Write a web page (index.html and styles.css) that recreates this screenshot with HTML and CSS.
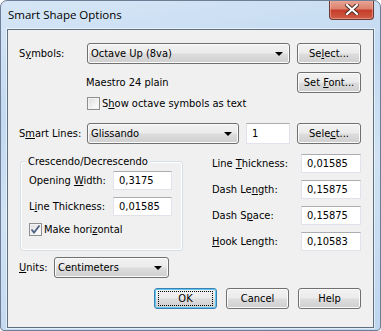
FILE: index.html
```html
<!DOCTYPE html>
<html lang="en">
<head>
  <meta charset="UTF-8" />
  <title>Smart Shape Options</title>
  <link rel="stylesheet" href="styles.css">
</head>
<body>
  <div class="window">
    <div class="titlebar">
      <span class="title">Smart Shape Options</span>
      <div class="close">
        <svg width="14" height="11" viewBox="0 0 14 11">
          <path d="M2 1 L12 10 M12 1 L2 10" stroke="#4a2a22" stroke-width="4" stroke-linecap="square"/>
          <path d="M2 1 L12 10 M12 1 L2 10" stroke="#ffffff" stroke-width="2.2" stroke-linecap="square"/>
        </svg>
      </div>
    </div>

    <div class="client">
      <div class="row row-symbols">
        <span class="lbl lbl-wide">S<u>y</u>mbols:</span>
        <div class="combo combo-symbols"><span>Octave Up (8va)</span><span class="arrow"></span></div>
        <div class="btn btn-side"><span>Se<u>l</u>ect...</span></div>
      </div>

      <div class="row row-font">
        <span class="font-name">Maestro 24 plain</span>
        <div class="btn btn-side"><span>Set <u>F</u>ont...</span></div>
      </div>

      <div class="check check-octave">
        <span class="box"></span>
        <span>S<u>h</u>ow octave symbols as text</span>
      </div>

      <div class="row row-lines">
        <span class="lbl lbl-wide">S<u>m</u>art Lines:</span>
        <div class="combo combo-lines"><span>Glissando</span><span class="arrow"></span></div>
        <div class="field-input input-count">1</div>
        <div class="btn btn-side"><span>Sele<u>c</u>t...</span></div>
      </div>

      <div class="lower">
        <div class="group">
          <div class="legend">Crescendo/Decrescendo</div>
          <div class="field">
            <span class="group-lbl">Opening <u>W</u>idth:</span>
            <div class="field-input input-small">0,3175</div>
          </div>
          <div class="field">
            <span class="group-lbl">L<u>i</u>ne Thickness:</span>
            <div class="field-input input-small">0,01585</div>
          </div>
          <div class="check check-horizontal">
            <span class="box">
              <svg width="11" height="11" viewBox="0 0 11 11">
                <path d="M1.5 5.5 L4 8.5 L9.5 1.5" fill="none" stroke="#4d6185" stroke-width="1.8"/>
              </svg>
            </span>
            <span>Make hori<u>z</u>ontal</span>
          </div>
        </div>

        <div class="fields">
          <div class="field">
            <span class="side-lbl">Line <u>T</u>hickness:</span>
            <div class="field-input input-side">0,01585</div>
          </div>
          <div class="field">
            <span class="side-lbl">Dash Le<u>n</u>gth:</span>
            <div class="field-input input-side">0,15875</div>
          </div>
          <div class="field">
            <span class="side-lbl">Dash S<u>p</u>ace:</span>
            <div class="field-input input-side">0,15875</div>
          </div>
          <div class="field">
            <span class="side-lbl"><u>H</u>ook Length:</span>
            <div class="field-input input-side">0,10583</div>
          </div>
        </div>
      </div>

      <div class="row row-units">
        <span class="lbl lbl-units"><u>U</u>nits:</span>
        <div class="combo combo-units"><span>Centimeters</span><span class="arrow"></span></div>
      </div>

      <div class="buttons">
        <div class="btn btn-dialog btn-default"><span class="focus">OK</span></div>
        <div class="btn btn-dialog"><span>Cancel</span></div>
        <div class="btn btn-dialog"><span>Help</span></div>
      </div>
    </div>
  </div>
</body>
</html>
```

FILE: styles.css
```css
body {
  margin: 0;
  background: #ffffff;
  font-family: 'DejaVu Sans Condensed', 'Liberation Sans', sans-serif;
  font-size: 11px;
  color: #000;
}
u {
  text-decoration: underline;
  text-underline-offset: 1px;
}
.window {
  width: 381px;
  height: 331px;
  box-sizing: border-box;
  border: 1px solid #6d7f96;
  border-radius: 7px 7px 4px 4px;
  background: linear-gradient(170deg, #d6e6f6 0%, #c2d9f1 30%, #d0e2f4 55%, #bed5ee 100%);
  padding: 0 6px 0 6px;
  overflow: hidden;
}
.titlebar {
  height: 28px;
  display: flex;
  align-items: flex-start;
}
.title {
  font-family: 'Open Sans', 'Liberation Sans', sans-serif;
  font-size: 11.5px;
  margin: 6px 0 0 1px;
  color: #000;
}
.close {
  margin-left: auto;
  margin-top: -1px;
  width: 45px;
  height: 20px;
  box-sizing: border-box;
  border: 1px solid #6b3a34;
  border-top: none;
  border-radius: 0 0 4px 4px;
  background: linear-gradient(#eaa899 0%, #dc826f 45%, #c63d2a 55%, #cf5e47 100%);
  box-shadow: inset 0 0 0 1px rgba(255, 200, 190, 0.45);
  display: flex;
  align-items: center;
  justify-content: center;
}
.client {
  width: 367px;
  height: 299px;
  box-sizing: border-box;
  border: 1px solid #5f6f80;
  box-shadow: 0 0 0 1px rgba(255, 255, 255, 0.55);
  background: #f0f0f0;
  padding: 0 12px 0 11px;
  display: flex;
  flex-direction: column;
}
.row {
  display: flex;
  align-items: center;
}
.row-symbols { margin-top: 13px; height: 21px; }
.row-font { margin-top: 8px; height: 21px; }
.row-lines { margin-top: 13px; height: 21px; }
.row-units { margin-top: 6px; height: 21px; }
.lbl-wide { width: 68px; }
.lbl-units { width: 35px; }
.font-name { margin-left: 67px; }
.btn {
  box-sizing: border-box;
  height: 21px;
  border: 1px solid #707070;
  border-radius: 3px;
  background: linear-gradient(#f2f2f2 0%, #ebebeb 48%, #dddddd 52%, #cfcfcf 100%);
  box-shadow: inset 0 0 0 1px #fbfbfb;
  display: flex;
  align-items: center;
  justify-content: center;
}
.btn-side {
  width: 64px;
  margin-left: auto;
}
.combo {
  box-sizing: border-box;
  height: 21px;
  border: 1px solid #707070;
  border-radius: 3px;
  background: linear-gradient(#f2f2f2 0%, #ebebeb 48%, #dddddd 52%, #cfcfcf 100%);
  box-shadow: inset 0 0 0 1px #fbfbfb;
  display: flex;
  align-items: center;
  padding-left: 3px;
}
.arrow {
  margin-left: auto;
  margin-right: 6px;
  width: 0;
  height: 0;
  border-left: 4px solid transparent;
  border-right: 4px solid transparent;
  border-top: 4px solid #000;
}
.combo-symbols { width: 203px; }
.combo-lines { width: 152px; }
.combo-units { width: 115px; }
.field-input {
  box-sizing: border-box;
  height: 19px;
  background: #fff;
  border: 1px solid #e2e3ea;
  border-top-color: #abadb3;
  display: flex;
  align-items: center;
  padding-left: 5px;
}
.input-count {
  width: 44px;
  height: 21px;
  margin-left: 7px;
}
.check {
  display: flex;
  align-items: center;
  height: 13px;
  gap: 2px;
}
.check-octave {
  margin-top: 4px;
  margin-left: 68px;
}
.box {
  width: 13px;
  height: 13px;
  box-sizing: border-box;
  border: 1px solid #8e8f8f;
  background: linear-gradient(135deg, #dcdcdc 0%, #f6f6f6 70%, #ffffff 100%);
  box-shadow: inset 0 0 0 1px #f4f4f4;
  display: flex;
  align-items: center;
  justify-content: center;
}
.lower {
  display: flex;
  align-items: flex-start;
  margin-top: 10px;
}
.group {
  width: 164px;
  box-sizing: border-box;
  margin-left: 1px;
  margin-top: 7px;
  border: 1px solid #d5dfe5;
  border-radius: 3px;
  box-shadow: inset 0 0 0 1px #ffffff;
  padding: 0 0 14px 8px;
}
.legend {
  margin-top: -7px;
  margin-left: -3px;
  padding: 0 2px;
  height: 13px;
  line-height: 13px;
  width: fit-content;
  background: #f0f0f0;
}
.field {
  display: flex;
  align-items: center;
}
.group .field { margin-top: 3px; }
.group .field + .field { margin-top: 7px; }
.group-lbl { width: 84px; }
.input-small { width: 59px; }
.check-horizontal { margin-top: 7px; }
.fields {
  margin-left: 29px;
  display: flex;
  flex-direction: column;
  gap: 7px;
}
.side-lbl { width: 89px; }
.input-side { width: 60px; }
.buttons {
  display: flex;
  justify-content: flex-end;
  gap: 9px;
  margin-top: 10px;
}
.btn-dialog { width: 63px; }
.btn-default {
  border-color: #3c7fb1;
  box-shadow: inset 0 0 0 1px #5ec6f0;
}
.focus {
  box-sizing: border-box;
  width: 55px;
  height: 15px;
  border: 1px dotted #000;
  display: flex;
  align-items: center;
  justify-content: center;
}
```
